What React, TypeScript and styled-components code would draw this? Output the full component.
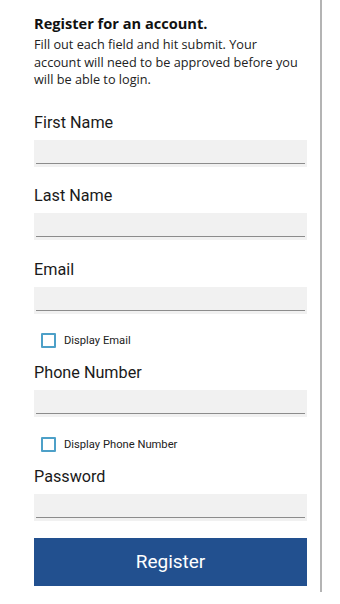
import { createGlobalStyle, styled } from "styled-components";

const GlobalStyle = createGlobalStyle`
  html, body {
    margin: 0;
    padding: 0;
    background: #ffffff;
  }
  * {
    box-sizing: border-box;
  }
`;

type Field = {
  label: string;
  type: string;
  checkbox?: string;
};

const fields: Field[] = [
  { label: "First Name", type: "text" },
  { label: "Last Name", type: "text" },
  { label: "Email", type: "email", checkbox: "Display Email" },
  { label: "Phone Number", type: "tel", checkbox: "Display Phone Number" },
  { label: "Password", type: "password" },
];

export default function App() {
  return (
    <>
      <GlobalStyle />
      <Page>
        <Form onSubmit={(e) => e.preventDefault()}>
          <Title>Register for an account.</Title>
          <Intro>
            Fill out each field and hit submit. Your account will need to be
            approved before you will be able to login.
          </Intro>
          <Fields>
            {fields.map((field) => (
              <FieldGroup key={field.label} $hasCheck={!!field.checkbox}>
                <Label>{field.label}</Label>
                <InputBox>
                  <Input type={field.type} />
                </InputBox>
                {field.checkbox && (
                  <CheckRow>
                    <CheckBox type="checkbox" />
                    <CheckLabel>{field.checkbox}</CheckLabel>
                  </CheckRow>
                )}
              </FieldGroup>
            ))}
          </Fields>
          <SubmitButton type="submit">Register</SubmitButton>
        </Form>
      </Page>
    </>
  );
}

const Page = styled.div`
  width: 322px;
  height: 592px;
  border-right: 2px solid #b4b4b4;
  padding: 13px 13px 0 34px;
`;

const Form = styled.form`
  display: flex;
  flex-direction: column;
`;

const Title = styled.h1`
  margin: 0;
  font-family: "Open Sans", sans-serif;
  font-weight: 700;
  font-size: 14.6px;
  line-height: 20px;
  color: #111111;
`;

const Intro = styled.p`
  margin: 3px 0 0;
  font-family: "Open Sans", sans-serif;
  font-size: 12.7px;
  line-height: 17.5px;
  color: #222222;
`;

const Fields = styled.div`
  display: flex;
  flex-direction: column;
  margin-top: 24px;
`;

const FieldGroup = styled.div<{ $hasCheck: boolean }>`
  display: flex;
  flex-direction: column;
  margin-bottom: ${(p) => (p.$hasCheck ? "12.5px" : "19.5px")};

  &:last-child {
    margin-bottom: 17px;
  }
`;

const Label = styled.label`
  font-family: Roboto, sans-serif;
  font-size: 16.2px;
  line-height: 20px;
  color: #1a1a1a;
  margin-bottom: 7px;
`;

const InputBox = styled.div`
  background: #f1f1f1;
  height: 27px;
  padding: 0 2px 3px;
`;

const Input = styled.input`
  display: block;
  width: 100%;
  height: 24px;
  border: none;
  border-bottom: 1.5px solid #8c8c8c;
  background: transparent;
  outline: none;
  font-family: Roboto, sans-serif;
  font-size: 13px;
`;

const CheckRow = styled.label`
  display: flex;
  align-items: center;
  gap: 8px;
  height: 20px;
  margin-top: 17px;
  padding-left: 7px;
`;

const CheckBox = styled.input`
  appearance: none;
  margin: 0;
  width: 15px;
  height: 15px;
  border: 2px solid #4da0c8;
  border-radius: 1px;
  background: #ffffff;
`;

const CheckLabel = styled.span`
  font-family: Roboto, sans-serif;
  font-size: 11.2px;
  color: #222222;
`;

const SubmitButton = styled.button`
  height: 48px;
  border: none;
  background: #22508f;
  color: #ffffff;
  font-family: Roboto, sans-serif;
  font-size: 19px;
  cursor: pointer;
`;
